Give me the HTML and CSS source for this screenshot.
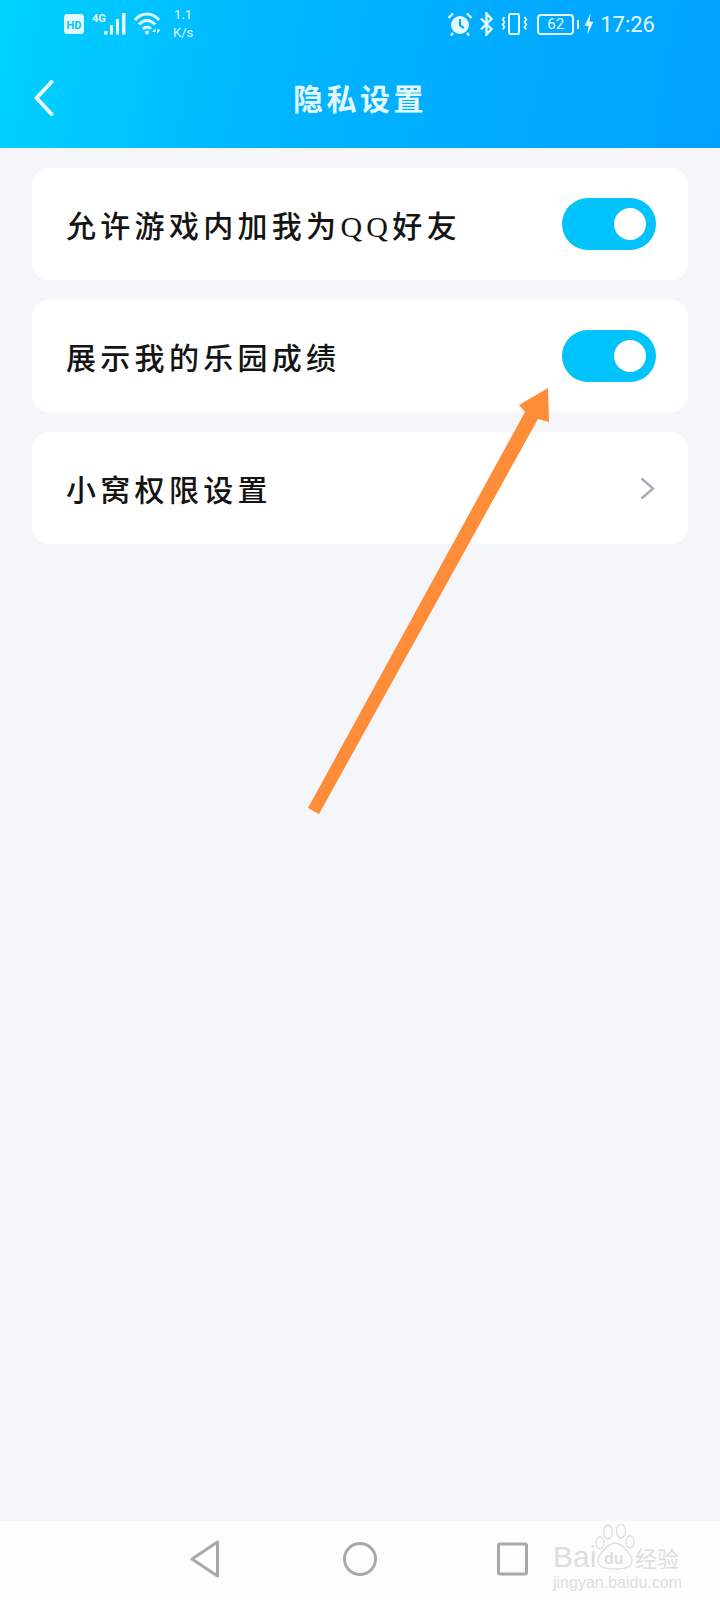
FILE: index.html
```html
<!DOCTYPE html>
<html lang="zh-CN">
<head>
<meta charset="UTF-8">
<meta name="viewport" content="width=device-width, initial-scale=1.0">
<title>隐私设置</title>
<link rel="stylesheet" href="styles.css">
</head>
<body>
<div class="screen">
  <div class="top">
    <div class="status-bar">
      <div class="status-left">
        <svg class="ic-hd" width="20" height="20" viewBox="0 0 20 20"><rect width="20" height="20" rx="3.5" fill="#e4f8ff"/><text x="10" y="14.5" text-anchor="middle" class="hd-text">HD</text></svg>
        <svg class="ic-signal" width="36" height="24" viewBox="0 0 36 24">
          <text x="0" y="10" class="g-text">4G</text>
          <rect x="12" y="19" width="3.5" height="3.5" fill="#e4f8ff"/>
          <rect x="18" y="13" width="3" height="9.5" fill="#e4f8ff"/>
          <rect x="24" y="7" width="3" height="15.5" fill="#e4f8ff"/>
          <rect x="30" y="1" width="3.500" height="21.5" fill="#e4f8ff"/>
        </svg>
        <svg class="ic-wifi" width="28" height="24" viewBox="0 0 28 24" fill="none" stroke="#e4f8ff" stroke-width="3">
          <path d="M1 8 C8 0 18 0 25 8"/>
          <path d="M5 12.500 C10 7 16 7 21 12.500"/>
          <path d="M9 17 C11.500 14.500 14.500 14.500 17 17"/>
          <circle cx="13" cy="20.500" r="2" fill="#e4f8ff" stroke="none"/>
          <path d="M18 20h3.500v-3.500zM23 17.500h3.500L23 22z" fill="#e4f8ff" stroke="none"/>
        </svg>
        <div class="speed"><span>1.1</span><span>K/s</span></div>
      </div>
      <div class="status-right">
        <svg width="26" height="24" viewBox="0 0 26 24">
          <circle cx="13" cy="13" r="9" fill="#e4f8ff"/>
          <path d="M13 7v6.500l4 2.500" fill="none" stroke="#00a8ff" stroke-width="2"/>
          <path d="M1.500 6 L6 1.500M24.500 6 L20 1.500M6 21l-2 2.500M20 21l2 2.500" stroke="#e4f8ff" stroke-width="2.400"/>
        </svg>
        <svg class="ic-bt" width="15" height="24" viewBox="0 0 15 24" fill="none" stroke="#e4f8ff" stroke-width="2.400">
          <path d="M2 6.500 L12.500 17 L7.500 22.500 V1.500 L12.500 7 L2 17.500"/>
        </svg>
        <svg class="ic-vib" width="27" height="24" viewBox="0 0 27 24" fill="none" stroke="#e4f8ff" stroke-width="2">
          <rect x="8" y="2" width="10" height="20" rx="1.500"/>
          <path d="M3.500 5l-1.800 2.500 1.800 2.500 -1.800 2.500 1.800 2.500 -1.800 2.500M23.500 5l1.800 2.500 -1.800 2.500 1.800 2.500 -1.800 2.500 1.800 2.500" stroke-width="1.800"/>
        </svg>
        <div class="battery"><span class="battery-num">62</span></div>
        <div class="battery-tip"></div>
        <svg class="ic-bolt" width="10" height="22" viewBox="0 0 9 20"><path d="M6 0 L0.500 11.500 H4 L3 20 L8.500 8 H5z" fill="#e4f8ff"/></svg>
        <span class="clock">17:26</span>
      </div>
    </div>
    <div class="title-bar">
      <svg class="back" width="20" height="36" viewBox="0 0 20 36" fill="none" stroke="#e4f8ff" stroke-width="4" stroke-linecap="round" stroke-linejoin="round">
        <path d="M17.500 2 L2.500 18 L17.500 34"/>
      </svg>
      <h1 class="title">隐私设置</h1>
    </div>
  </div>

  <div class="content">
    <div class="card">
      <span class="label">允许游戏内加我为QQ好友</span>
      <div class="switch"><div class="knob"></div></div>
    </div>
    <div class="card">
      <span class="label">展示我的乐园成绩</span>
      <div class="switch"><div class="knob"></div></div>
    </div>
    <div class="card">
      <span class="label">小窝权限设置</span>
      <svg class="chevron" width="15" height="23" viewBox="0 0 15 23" fill="none" stroke="#a9adb4" stroke-width="2.400">
        <path d="M1.500 1.500 L13 11.500 L1.500 21.500"/>
      </svg>
    </div>
  </div>

  <div class="nav-bar">
    <svg class="nav-back" width="30" height="38" viewBox="0 0 30 38" fill="none" stroke="#a8a8a8" stroke-width="3" stroke-linejoin="round">
      <path d="M27.500 2 V36 L2 19z"/>
    </svg>
    <svg class="nav-home" width="34" height="38" viewBox="0 0 34 38" fill="none" stroke="#a8a8a8" stroke-width="3">
      <circle cx="17" cy="19" r="15.500"/>
    </svg>
    <svg class="nav-recent" width="32" height="34" viewBox="0 0 32 34" fill="none" stroke="#a8a8a8" stroke-width="3" stroke-linejoin="round">
      <rect x="1.500" y="2" width="28" height="30" rx="1.500"/>
    </svg>
  </div>

  <!-- annotation arrow drawn over the page -->
  <svg class="arrow" width="720" height="1600" viewBox="0 0 720 1600">
    <path d="M308 808 L525 412 L519 405 L548 388 L549 422 L538 419 L319 814z" fill="#ff8c38"/>
  </svg>

  <div class="watermark">
    <svg class="paw" width="40" height="46" viewBox="0 0 40 46" fill="#fdfdfd" stroke="#dedede" stroke-width="1.300">
      <ellipse cx="13" cy="8" rx="4.500" ry="7"/>
      <ellipse cx="26" cy="7" rx="4.500" ry="7"/>
      <ellipse cx="5" cy="19" rx="4" ry="6"/>
      <ellipse cx="35" cy="18" rx="4" ry="6"/>
      <path d="M20 19 C13 19 3 31 3 37 C3 44 12 45 20 45 C28 45 37 44 37 37 C37 31 27 19 20 19z"/>
    </svg>
    <span class="wm-bai">Bai</span>
    <span class="wm-du">du</span>
    <span class="wm-jy">经验</span>
    <span class="wm-url">jingyan.baidu.com</span>
  </div>
</div>
</body>
</html>
```

FILE: styles.css
```css
* {
  box-sizing: border-box;
}
body {
  margin: 0;
  background: #f4f6fa;
  font-family: "Liberation Serif", "Noto Sans CJK SC", serif;
}
.screen {
  position: relative;
  display: flex;
  flex-direction: column;
  width: 720px;
  height: 1600px;
  overflow: hidden;
}
.top {
  height: 148px;
  background: linear-gradient(100deg, #00d2ff 0%, #00b4ff 40%, #00a2ff 100%);
  color: #e4f8ff;
}
.status-bar {
  display: flex;
  justify-content: space-between;
  align-items: center;
  height: 48px;
  padding: 0 65px 0 64px;
}
.status-left, .status-right {
  display: flex;
  align-items: center;
}
.ic-signal {
  margin-left: 8px;
}
.ic-wifi {
  margin-left: 6px;
}
.hd-text {
  font: bold 11px "Roboto", sans-serif;
  fill: #00c4ff;
}
.g-text {
  font: bold 11px "Roboto", sans-serif;
  fill: #e4f8ff;
}
.speed {
  display: flex;
  flex-direction: column;
  align-items: center;
  margin-left: 11px;
  font: 13px/18px "Roboto", sans-serif;
}
.ic-bt {
  margin-left: 6px;
}
.ic-vib {
  margin-left: 7px;
}
.battery {
  display: flex;
  justify-content: center;
  align-items: center;
  width: 37px;
  height: 21px;
  margin-left: 9px;
  border: 2px solid #e4f8ff;
  border-radius: 4px;
}
.battery-num {
  font: 15px "Roboto", sans-serif;
}
.battery-tip {
  width: 2px;
  height: 9px;
  margin-left: 3px;
  background: #e4f8ff;
}
.ic-bolt {
  margin-left: 5px;
}
.clock {
  margin-left: 6px;
  font: 22px "Roboto", sans-serif;
}
.title-bar {
  position: relative;
  display: flex;
  justify-content: center;
  align-items: center;
  height: 100px;
}
.back {
  position: absolute;
  left: 34px;
  top: 32px;
}
.title {
  margin: 0 0 2px;
  font-size: 30px;
  font-weight: 700;
  letter-spacing: 3.500px;
  color: #e4f8ff;
}
.content {
  flex: 1;
  display: flex;
  flex-direction: column;
  gap: 20px;
  padding: 20px 32px;
}
.card {
  display: flex;
  justify-content: space-between;
  align-items: center;
  height: 112px;
  padding: 0 32px 0 34px;
  background: #fff;
  border-radius: 16px;
}
.label {
  font-size: 30px;
  font-weight: 500;
  letter-spacing: 4.300px;
  color: #141414;
}
.switch {
  display: flex;
  justify-content: flex-end;
  align-items: center;
  width: 94px;
  height: 52px;
  padding-right: 10px;
  background: #00c3fb;
  border-radius: 26px;
}
.knob {
  width: 32px;
  height: 32px;
  background: #fff;
  border-radius: 50%;
}
.chevron {
  margin-right: 1px;
}
.nav-bar {
  display: flex;
  align-items: center;
  height: 79px;
  padding: 0 0 3px 190px;
  background: #fdfdfd;
}
.nav-home {
  margin-left: 123px;
}
.nav-recent {
  margin-left: 120px;
}
.arrow {
  position: absolute;
  left: 0;
  top: 0;
}
/* baidu stamp in the corner, pieces placed around the paw */
.watermark {
  position: absolute;
  left: 553px;
  top: 1524px;
  width: 130px;
  height: 68px;
  color: #dedede;
  white-space: nowrap;
}
.paw {
  position: absolute;
  left: 42px;
  top: 0;
}
.wm-bai {
  position: absolute;
  left: 0;
  top: 15px;
  font: 30px/36px "Liberation Sans", sans-serif;
}
.wm-du {
  position: absolute;
  left: 51px;
  top: 25px;
  font: bold 16px/20px "Liberation Sans", sans-serif;
}
.wm-jy {
  position: absolute;
  left: 82px;
  top: 17px;
  font: 22px/32px "Noto Sans CJK SC", sans-serif;
}
.wm-url {
  position: absolute;
  left: 0;
  top: 49px;
  font: 16px/20px "Liberation Sans", sans-serif;
}
```
